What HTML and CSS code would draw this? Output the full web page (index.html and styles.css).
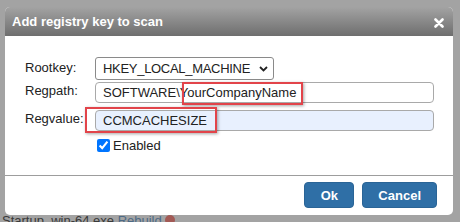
FILE: index.html
```html
<!DOCTYPE html>
<html>
<head>
  <title>Add registry key</title>
  <link rel="stylesheet" href="styles.css">
</head>
<body>
  <div class="page">
    <p class="behind">Startup_win-64.exe <span class="link">Rebuild</span> <span class="bad"></span></p>
  </div>

  <div class="modal">
    <div class="modal-title">
      <span>Add registry key to scan</span>
      <svg class="close" width="10" height="10" viewBox="0 0 10 10">
        <path d="M1.5 1.5 L8.5 8.5 M8.5 1.5 L1.5 8.5" stroke="#fff" stroke-width="2.6" stroke-linecap="round"/>
      </svg>
    </div>

    <div class="modal-body">
      <div class="form-grid">
        <label class="lbl">Rootkey:</label>
        <span class="select-wrap">
          <select class="rootkey">
            <option>HKEY_LOCAL_MACHINE</option>
            <option>HKEY_CURRENT_USER</option>
          </select>
          <svg class="chevron" width="9" height="6" viewBox="0 0 9 6">
            <path d="M1 1 L4.5 4.5 L8 1" fill="none" stroke="#222" stroke-width="1.8"/>
          </svg>
        </span>

        <label class="lbl">Regpath:</label>
        <input type="text" class="field" value="SOFTWARE\YourCompanyName">

        <label class="lbl lbl-value">Regvalue:</label>
        <input type="text" class="field field-value autofill" value="CCMCACHESIZE">

        <span></span>
        <label class="check"><input type="checkbox" checked>Enabled</label>
      </div>
    </div>

    <div class="modal-footer">
      <button class="btn">Ok</button>
      <button class="btn">Cancel</button>
    </div>

    <!-- screenshot annotations -->
    <span class="mark mark-path"></span>
    <span class="mark mark-value"></span>
  </div>
</body>
</html>
```

FILE: styles.css
```css
body {
  margin: 0;
  width: 460px;
  height: 222px;
  overflow: hidden;
  background-color: #a3a3a3;
  font-family: "Liberation Sans", Arial, sans-serif;
  font-size: 13px;
  color: #222;
  position: relative;
}

.page {
  height: 222px;
  display: flex;
  align-items: flex-end;
}

.behind {
  margin: 0 0 -7px 2px;
  line-height: 16px;
  color: #3a3a3a;
  font-size: 13px;
}

.behind .link {
  color: #4d6a86;
}

.behind .bad {
  display: inline-block;
  width: 10px;
  height: 10px;
  border-radius: 50%;
  background-color: #a25a55;
}

.modal {
  position: absolute;
  top: 7px;
  left: 5px;
  width: 448px;
  background-color: #fff;
  border-radius: 5px;
}

.modal-title {
  height: 29px;
  display: flex;
  align-items: center;
  justify-content: space-between;
  padding: 0 9px 0 7px;
  border-radius: 5px 5px 0 0;
  background: linear-gradient(#a3a3a3, #6e6e6e);
  color: #fff;
  font-weight: bold;
  font-size: 13px;
}

.modal-title .close {
  margin-top: 2px;
}

.modal-body {
  padding: 21px 18px 23px 20px;
  border-bottom: 1px solid #9d9d9d;
}

.form-grid {
  display: grid;
  grid-template-columns: 70px 1fr;
  align-items: center;
}

.lbl {
  margin-top: -3px;
}

.select-wrap {
  position: relative;
  width: 179px;
  height: 23px;
}

.rootkey {
  appearance: none;
  width: 179px;
  height: 23px;
  margin: 0;
  font-family: "Liberation Sans", Arial, sans-serif;
  font-size: 13px;
  letter-spacing: -0.3px;
  color: #222;
  padding: 0 0 0 7px;
  border: 1px solid #8a8a8a;
  border-radius: 3px;
  background-color: #fff;
}

.chevron {
  position: absolute;
  right: 6px;
  top: 9px;
}

.field {
  width: 339px;
  height: 21px;
  margin: 2px 0 0;
  box-sizing: border-box;
  padding: 0 7px;
  border: 1px solid #a9a9a9;
  border-radius: 4px;
  font-family: "Liberation Sans", Arial, sans-serif;
  font-size: 13px;
  color: #222;
}

.field-value {
  margin-top: 7px;
}

.lbl-value {
  margin-top: 2px;
}

.autofill {
  background-color: #e8f0fe;
}

.check {
  display: flex;
  align-items: center;
  margin-top: 8px;
  height: 13px;
}

.check input {
  width: 13px;
  height: 13px;
  margin: 0 3px 0 2px;
}

.modal-footer {
  display: flex;
  justify-content: flex-end;
  gap: 8px;
  padding: 6px 16px 7px;
}

.btn {
  height: 26px;
  padding: 0 15px;
  min-width: 50px;
  border: 1px solid #2a6496;
  border-radius: 4px;
  background-color: #2f6fa6;
  color: #fff;
  font-family: "Liberation Sans", Arial, sans-serif;
  font-weight: bold;
  font-size: 13px;
}

.mark {
  position: absolute;
  border: 2px solid #e2444a;
  box-shadow: 1px 1px 3px rgba(0, 0, 0, 0.35);
  box-sizing: border-box;
}

.mark-path {
  left: 177px;
  top: 75px;
  width: 121px;
  height: 23px;
}

.mark-value {
  left: 80px;
  top: 100px;
  width: 132px;
  height: 26px;
}
```
